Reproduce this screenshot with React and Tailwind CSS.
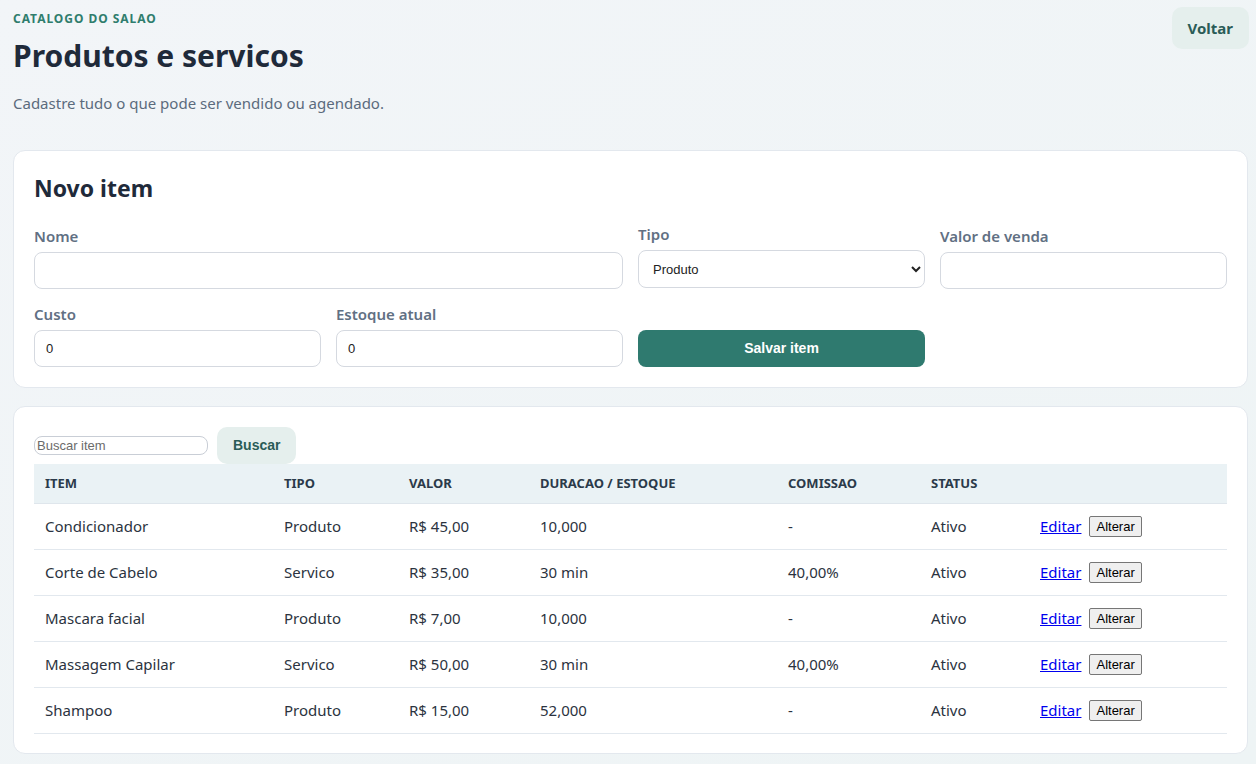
import React from 'react';

// ── Catalog rows ─────────────────────────────────────────────────────────────
const ITEMS = [
  { name: 'Condicionador',    tipo: 'Produto', valor: 'R$ 45,00', dur: '10,000', com: '-',      status: 'Ativo' },
  { name: 'Corte de Cabelo',  tipo: 'Servico', valor: 'R$ 35,00', dur: '30 min', com: '40,00%', status: 'Ativo' },
  { name: 'Mascara facial',   tipo: 'Produto', valor: 'R$ 7,00',  dur: '10,000', com: '-',      status: 'Ativo' },
  { name: 'Massagem Capilar', tipo: 'Servico', valor: 'R$ 50,00', dur: '30 min', com: '40,00%', status: 'Ativo' },
  { name: 'Shampoo',          tipo: 'Produto', valor: 'R$ 15,00', dur: '52,000', com: '-',      status: 'Ativo' },
];

const inputCls =
  'h-[37px] w-full rounded-[8px] border border-[#d5d9e0] bg-white px-3 text-[13px] text-[#222] font-["Liberation_Sans",sans-serif] outline-none';

function Field({ label, children, className = '' }) {
  return (
    <div className={`flex flex-col gap-[6px] ${className}`}>
      <label className="text-[15px] font-semibold leading-[20px] text-[#617083]">{label}</label>
      {children}
    </div>
  );
}

export default function App() {
  return (
    <div className="min-h-[764px] bg-gradient-to-br from-[#f2f5f8] to-[#eef4f5] pl-[13px] pr-[7px] pb-[10px] font-['Noto_Sans',sans-serif] text-[#1f2a37]">
      {/* Header */}
      <header className="flex items-start justify-between pt-[11px]">
        <div>
          <p className="text-[12px] font-bold uppercase leading-[16px] tracking-[0.08em] text-[#2f7d6d]">
            Catalogo do salao
          </p>
          <h1 className="mt-[9px] text-[30px] font-bold leading-[40px] text-[#1f2a3a]">Produtos e servicos</h1>
          <p className="mt-[17px] text-[15px] leading-[20px] text-[#5b6b7d]">
            Cadastre tudo o que pode ser vendido ou agendado.
          </p>
        </div>
        <button className="mt-[-4px] h-[42px] rounded-[10px] bg-[#e5efed] px-4 text-[15px] font-bold text-[#2a5c57]">
          Voltar
        </button>
      </header>

      {/* Novo item */}
      <section className="mr-[1px] mt-[37px] rounded-[12px] border border-[#e3e8ee] bg-white px-[20px] pt-[22px] pb-[20px]">
        <h2 className="text-[23px] font-bold leading-[30px] text-[#1f2a3a]">Novo item</h2>
        <div className="mt-[21px] grid grid-cols-4 gap-x-[15px] gap-y-[15px]">
          <Field label="Nome" className="col-span-2 pt-[2px]">
            <input className={`${inputCls} h-[36px]`} />
          </Field>
          <Field label="Tipo">
            <select className={`${inputCls} h-[38px] pl-[10px]`} defaultValue="Produto">
              <option>Produto</option>
              <option>Servico</option>
            </select>
          </Field>
          <Field label="Valor de venda" className="pt-[2px]">
            <input className={`${inputCls} h-[36px]`} />
          </Field>
          <Field label="Custo">
            <input className={`${inputCls} px-[11px]`} defaultValue="0" />
          </Field>
          <Field label="Estoque atual">
            <input className={`${inputCls} px-[11px]`} defaultValue="0" />
          </Field>
          <div className="flex items-end">
            <button className="h-[37px] w-full rounded-[8px] bg-[#2f7a6f] text-[14px] font-bold text-white font-['Liberation_Sans',sans-serif]">
              Salvar item
            </button>
          </div>
        </div>
      </section>

      {/* Lista */}
      <section className="mr-[1px] mt-[18px] rounded-[12px] border border-[#e3e8ee] bg-white px-[20px] pt-[20px] pb-[19px]">
        <div className="flex items-center gap-[9px]">
          <input
            placeholder="Buscar item"
            className="h-[19px] w-[174px] rounded-[8px] border border-[#c9ced6] px-[2px] text-[13px] font-['Liberation_Sans',sans-serif] placeholder:text-[#6b6b6b] outline-none"
          />
          <button className="h-[37px] rounded-[10px] bg-[#e5efed] px-4 text-[14px] font-bold text-[#2a5c57] font-['Liberation_Sans',sans-serif]">
            Buscar
          </button>
        </div>
        <table className="w-full border-collapse text-left">
          <thead>
            <tr className="h-[39px] bg-[#eaf2f5] text-[13px] font-bold uppercase text-[#2b3a4a]">
              <th className="w-[239px] border-b border-[#dfe6ec] pl-[11px]">Item</th>
              <th className="w-[125px] border-b border-[#dfe6ec] pl-[11px]">Tipo</th>
              <th className="w-[131px] border-b border-[#dfe6ec] pl-[11px]">Valor</th>
              <th className="w-[248px] border-b border-[#dfe6ec] pl-[11px]">Duracao / Estoque</th>
              <th className="w-[143px] border-b border-[#dfe6ec] pl-[11px]">Comissao</th>
              <th className="w-[109px] border-b border-[#dfe6ec] pl-[11px]">Status</th>
              <th className="border-b border-[#dfe6ec]"></th>
            </tr>
          </thead>
          <tbody>
            {ITEMS.map((it) => (
              <tr key={it.name} className="h-[46px] border-b border-[#e2e8ee] text-[15px] text-[#2b3340]">
                <td className="pl-[11px]">{it.name}</td>
                <td className="pl-[11px]">{it.tipo}</td>
                <td className="pl-[11px]">{it.valor}</td>
                <td className="pl-[11px]">{it.dur}</td>
                <td className="pl-[11px]">{it.com}</td>
                <td className="pl-[11px]">{it.status}</td>
                <td className="pl-[11px]">
                  <div className="flex items-center gap-[8px]">
                    <a href="#" className="text-[15px] text-[#0000ee] underline">Editar</a>
                    <button className="h-[21px] rounded-[2px] border border-[#767676] bg-[#efefef] px-[6px] text-[13px] text-black font-['Liberation_Sans',sans-serif]">
                      Alterar
                    </button>
                  </div>
                </td>
              </tr>
            ))}
          </tbody>
        </table>
      </section>
    </div>
  );
}
